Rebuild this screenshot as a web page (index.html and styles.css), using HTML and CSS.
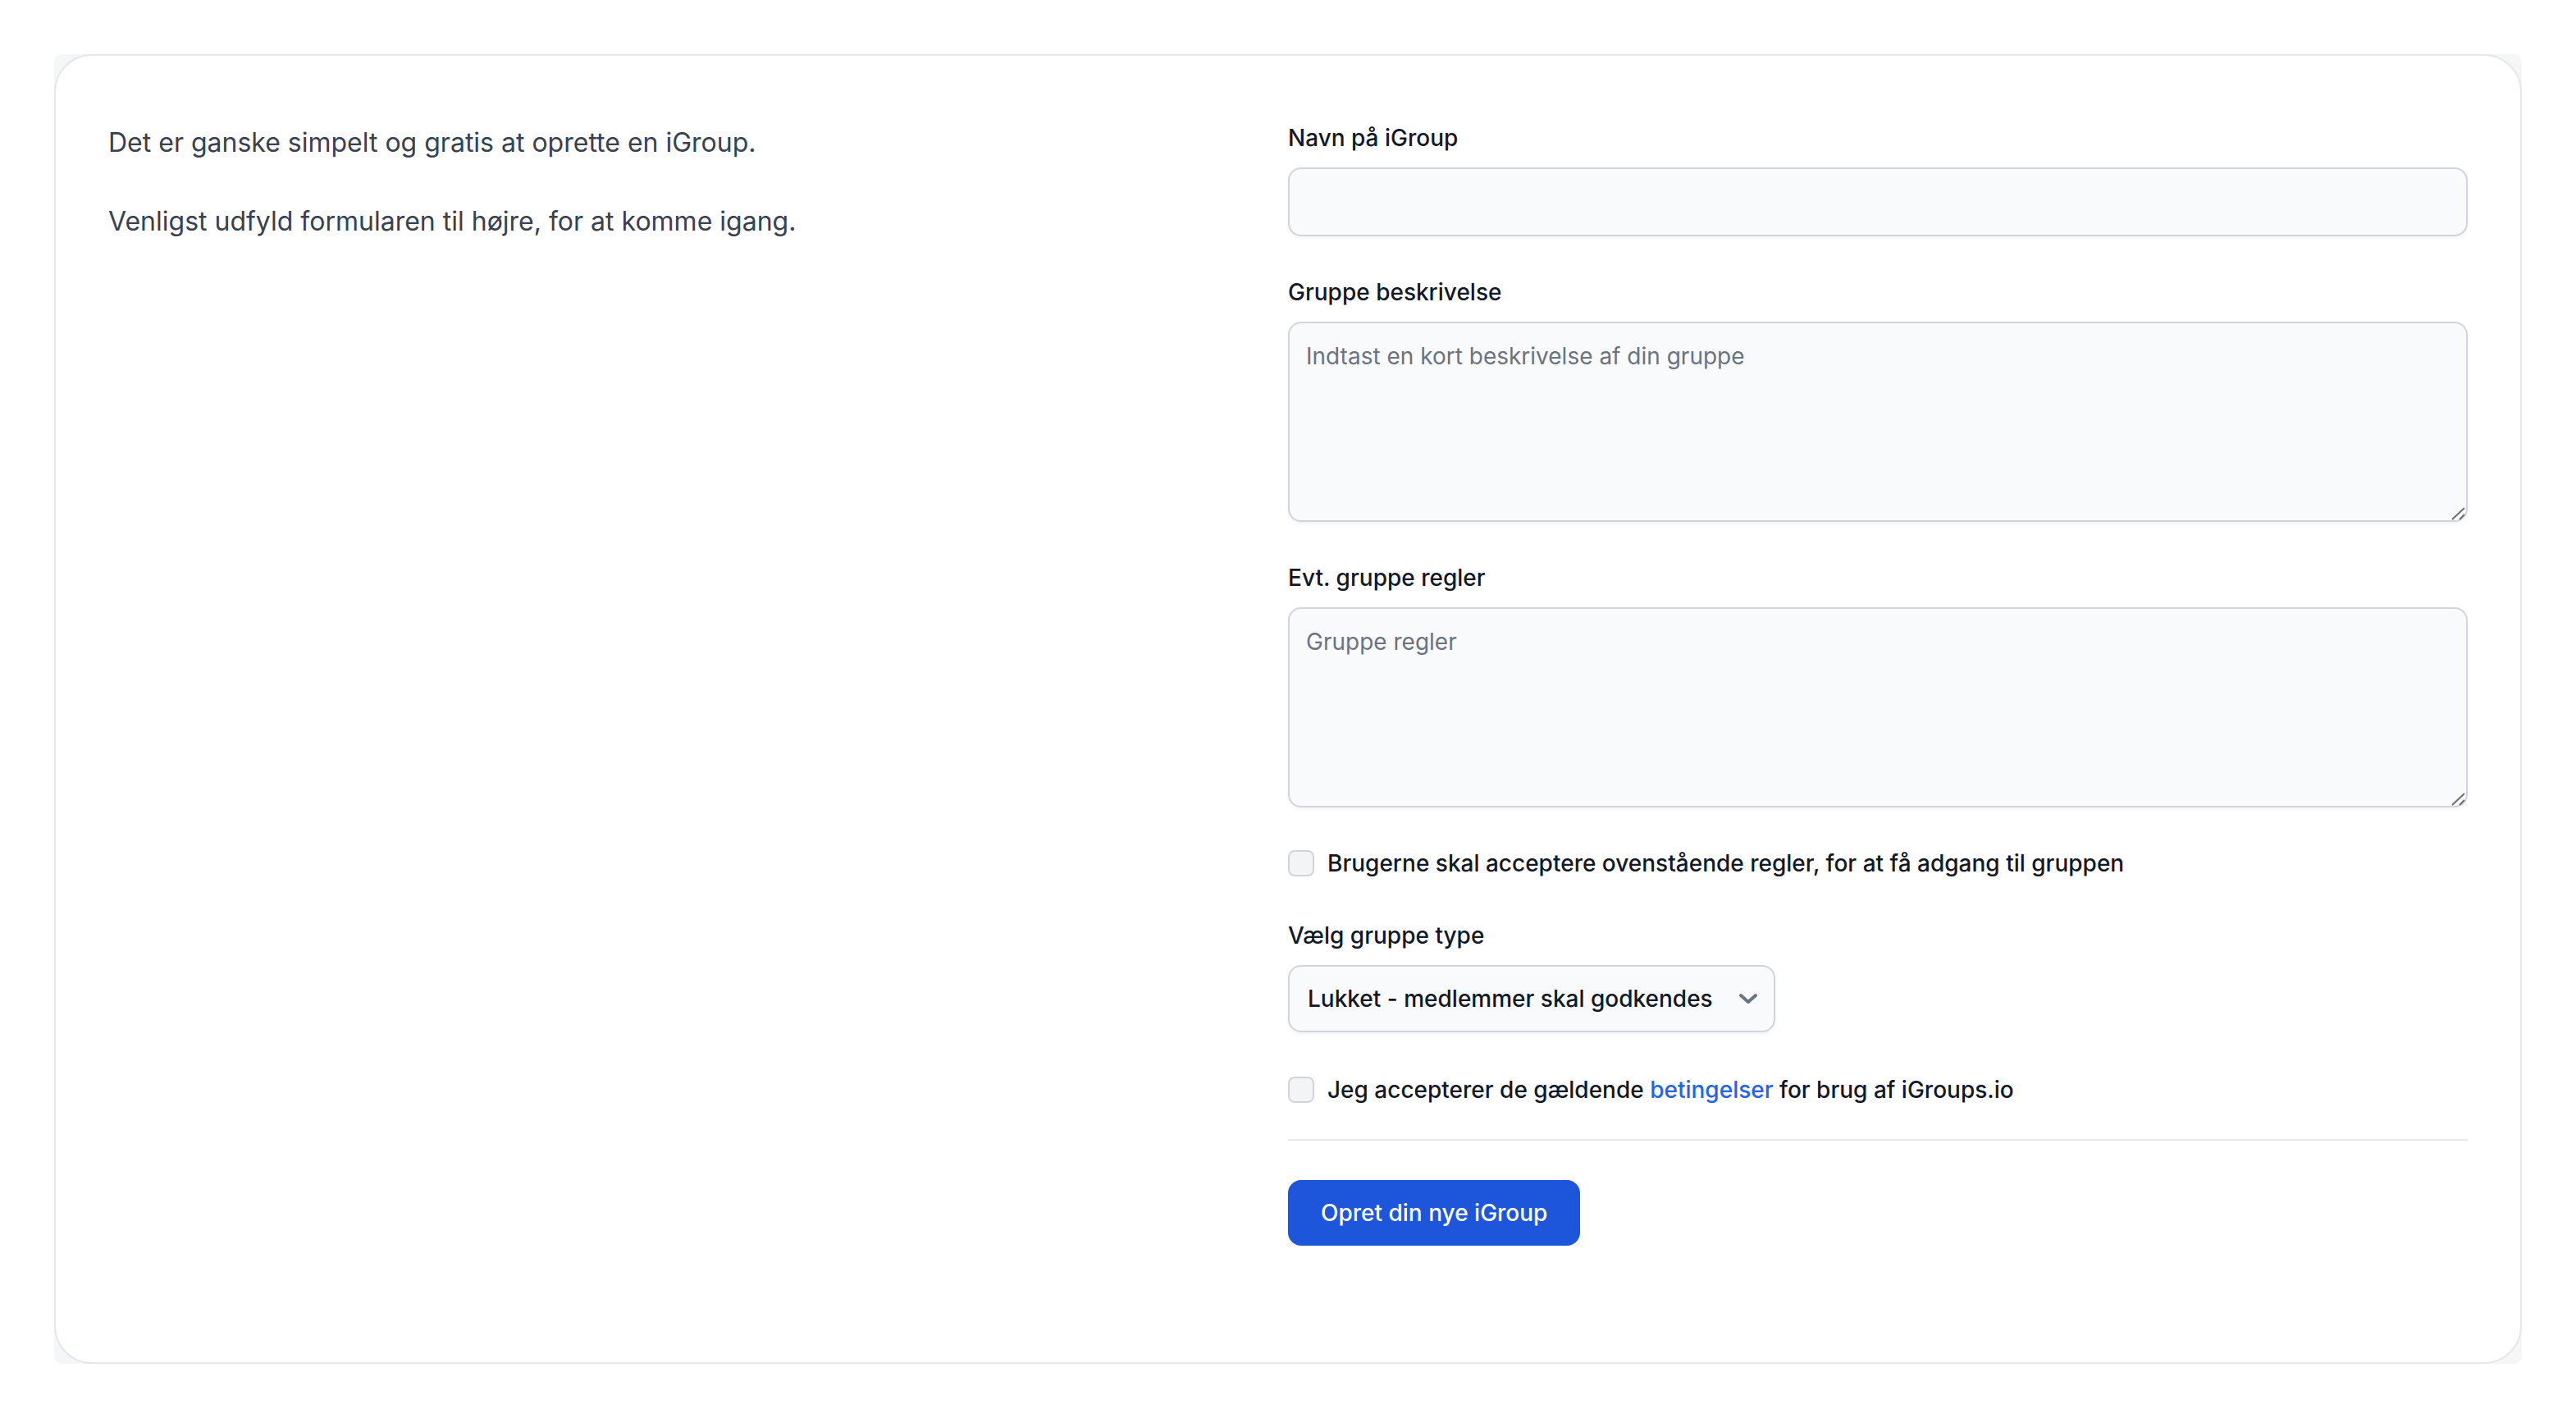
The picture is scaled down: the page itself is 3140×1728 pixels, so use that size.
FILE: index.html
```html
<!DOCTYPE html>
<html lang="da">
<head>
<meta charset="utf-8">
<title>Opret iGroup</title>
<link rel="stylesheet" href="styles.css">
</head>
<body>
<div class="page">
  <div class="frame">
    <div class="card">
      <div class="intro">
        <p>Det er ganske simpelt og gratis at oprette en iGroup.</p>
        <p>Venligst udfyld formularen til højre, for at komme igang.</p>
      </div>
      <form class="form">
        <div class="field">
          <label class="label" for="name">Navn på iGroup</label>
          <input class="input" id="name" type="text">
        </div>
        <div class="field">
          <label class="label" for="desc">Gruppe beskrivelse</label>
          <div class="textarea-wrap">
            <textarea class="input textarea" id="desc" placeholder="Indtast en kort beskrivelse af din gruppe"></textarea>
            <svg class="grip" width="20" height="20" viewBox="0 0 20 20" aria-hidden="true">
              <path d="M3 19 L18 5 M12 19 L18 13" fill="none" stroke="#6f6f6f" stroke-width="2"/>
            </svg>
          </div>
        </div>
        <div class="field">
          <label class="label" for="rules">Evt. gruppe regler</label>
          <div class="textarea-wrap">
            <textarea class="input textarea" id="rules" placeholder="Gruppe regler"></textarea>
            <svg class="grip" width="20" height="20" viewBox="0 0 20 20" aria-hidden="true">
              <path d="M3 19 L18 5 M12 19 L18 13" fill="none" stroke="#6f6f6f" stroke-width="2"/>
            </svg>
          </div>
        </div>
        <label class="check-row">
          <input class="checkbox" type="checkbox">
          <span>Brugerne skal acceptere ovenstående regler, for at få adgang til gruppen</span>
        </label>
        <div class="field">
          <label class="label" for="type">Vælg gruppe type</label>
          <div class="select-wrap">
            <select class="select" id="type">
              <option>Lukket - medlemmer skal godkendes</option>
              <option>Åben - alle kan deltage</option>
            </select>
            <svg class="chevron" width="24" height="14" viewBox="0 0 24 14" aria-hidden="true">
              <path d="M3 3 L12 11 L21 3" fill="none" stroke="#6b7280" stroke-width="4" stroke-linecap="round" stroke-linejoin="round"/>
            </svg>
          </div>
        </div>
        <label class="check-row check-row-terms">
          <input class="checkbox" type="checkbox">
          <span>Jeg accepterer de gældende <a class="link" href="#">betingelser</a> for brug af iGroups.io</span>
        </label>
        <div class="form-footer">
          <button class="button" type="button">Opret din nye iGroup</button>
        </div>
      </form>
    </div>
  </div>
</div>
</body>
</html>
```

FILE: styles.css
```css
* {
  box-sizing: border-box;
}

html, body {
  margin: 0;
  padding: 0;
  background: #ffffff;
}

body {
  font-family: Inter, "Noto Sans", "Liberation Sans", sans-serif;
  color: #111827;
}

.page {
  padding: 66px 66px 67px 66px;
}

.frame {
  background: #f5f6f8;
  border-radius: 10px;
}

.card {
  background: #ffffff;
  border: 2px solid #e5e7eb;
  border-radius: 46px;
  padding: 82px 64px 141px 64px;
  display: grid;
  grid-template-columns: 1fr 1fr;
  min-height: 1596px;
}

.intro p {
  margin: 0 0 48px 0;
  font-size: 32px;
  line-height: 48px;
  color: #374151;
}

.form {
  display: flex;
  flex-direction: column;
  gap: 48px;
  margin-top: -2px;
}

.field {
  display: flex;
  flex-direction: column;
}

.label {
  display: block;
  font-size: 28px;
  line-height: 40px;
  font-weight: 500;
  color: #111827;
  margin-bottom: 16px;
}

.input {
  display: block;
  width: 100%;
  height: 84px;
  background: #f9fafb;
  border: 2px solid #d1d5db;
  border-radius: 16px;
  box-shadow: 0 2px 4px rgba(15, 23, 42, 0.05);
  padding: 20px;
  font-family: Inter, "Noto Sans", "Liberation Sans", sans-serif;
  font-size: 28px;
  line-height: 40px;
  color: #111827;
  outline: none;
}

.textarea-wrap {
  position: relative;
}

.textarea {
  height: 244px;
  resize: none;
}

.grip {
  position: absolute;
  right: 2px;
  bottom: 2px;
  pointer-events: none;
}

.input::placeholder {
  color: #6b7280;
}

.check-row {
  display: flex;
  align-items: center;
  gap: 16px;
  height: 40px;
  font-size: 28px;
  line-height: 40px;
  font-weight: 500;
  color: #111827;
}

.check-row-terms {
  margin-top: 2px;
}

.checkbox {
  appearance: none;
  -webkit-appearance: none;
  margin: 0;
  width: 32px;
  height: 32px;
  flex: 0 0 32px;
  background: #f3f4f6;
  border: 2px solid #d1d5db;
  border-radius: 8px;
}

.link {
  color: #2563eb;
  text-decoration: none;
}

.select-wrap {
  position: relative;
  align-self: flex-start;
}

.select {
  appearance: none;
  -webkit-appearance: none;
  display: block;
  height: 82px;
  background: #f9fafb;
  border: 2px solid #d1d5db;
  border-radius: 16px;
  box-shadow: 0 2px 4px rgba(15, 23, 42, 0.05);
  padding: 0 74px 0 22px;
  font-family: Inter, "Noto Sans", "Liberation Sans", sans-serif;
  font-size: 28px;
  line-height: 40px;
  font-weight: 500;
  color: #111827;
  outline: none;
}

.chevron {
  position: absolute;
  right: 21px;
  top: 34px;
  pointer-events: none;
}

.form-footer {
  margin-top: -8px;
  border-top: 2px solid #e5e7eb;
  padding-top: 48px;
}

.button {
  height: 80px;
  padding: 0 40px;
  background: #1d55db;
  color: #ffffff;
  border: none;
  border-radius: 16px;
  font-family: Inter, "Noto Sans", "Liberation Sans", sans-serif;
  font-size: 28px;
  line-height: 40px;
  font-weight: 500;
  cursor: pointer;
}
```
